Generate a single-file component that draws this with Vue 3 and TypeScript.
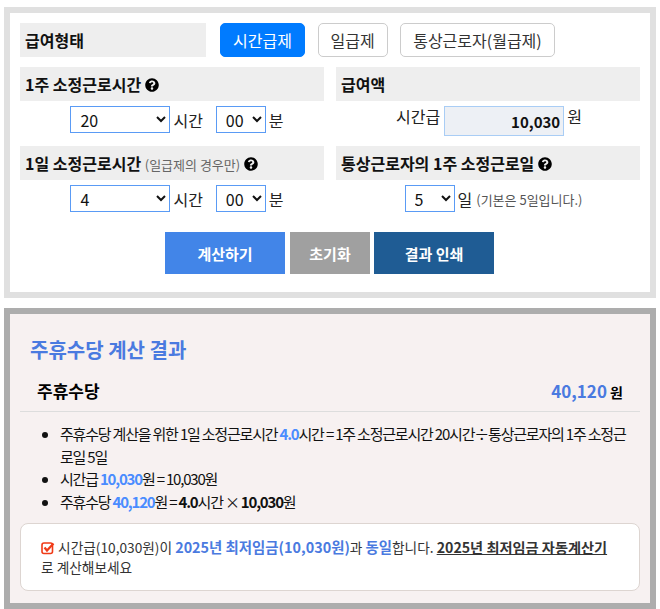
<script setup lang="ts">
const payTypes: string[] = ['시간급제', '일급제', '통상근로자(월급제)']
</script>

<template>
  <div class="page">
    <section class="form-panel">
      <div class="type-row">
        <div class="type-label">급여형태</div>
        <div class="type-buttons">
          <button v-for="(t, i) in payTypes" :key="t" class="type-btn" :class="{ active: i === 0 }">{{ t }}</button>
        </div>
      </div>
      <div class="grid">
        <div class="cell">
          <div class="head">1주 소정근로시간 <svg class="help" viewBox="0 0 512 512"><path d="M504 256c0 137-111 248-248 248S8 393 8 256 119 8 256 8s248 111 248 248zM262.700 90c-54.500 0-89.300 23-116.500 63.800-3.500 5.300-2.400 12.400 2.700 16.300l34.700 26.300c5.200 3.900 12.600 3 16.700-2.100 17.900-22.700 30.100-35.800 57.300-35.800 20.400 0 45.700 13.100 45.700 32.900 0 15-12.400 22.700-32.500 34-23.500 13.200-54.600 29.600-54.600 70.700V302c0 6.600 5.400 12 12 12h56c6.600 0 12-5.400 12-12v-1.300c0-28.500 83.200-29.700 83.200-106.700 0-58-60.200-102-116.700-102zM256 338c-25.400 0-46 20.600-46 46s20.600 46 46 46 46-20.600 46-46-20.600-46-46-46z"/></svg></div>
          <div class="controls shifted">
            <select class="sel wide"><option>20</option></select><span class="unit">시간</span>
            <select class="sel narrow gap"><option>00</option></select><span class="unit">분</span>
          </div>
        </div>
        <div class="cell">
          <div class="head">급여액</div>
          <div class="controls wage">
            <span class="unit wage-label">시간급</span>
            <input class="wage-input" value="10,030" readonly />
            <span class="unit">원</span>
          </div>
        </div>
        <div class="cell">
          <div class="head">1일 소정근로시간 <small>(일급제의 경우만)</small> <svg class="help" viewBox="0 0 512 512"><path d="M504 256c0 137-111 248-248 248S8 393 8 256 119 8 256 8s248 111 248 248zM262.700 90c-54.500 0-89.300 23-116.500 63.800-3.500 5.300-2.400 12.400 2.700 16.300l34.700 26.300c5.200 3.900 12.600 3 16.700-2.100 17.900-22.700 30.100-35.800 57.300-35.800 20.400 0 45.700 13.100 45.700 32.900 0 15-12.400 22.700-32.500 34-23.500 13.200-54.600 29.600-54.600 70.700V302c0 6.600 5.400 12 12 12h56c6.600 0 12-5.400 12-12v-1.300c0-28.500 83.200-29.700 83.200-106.700 0-58-60.200-102-116.700-102zM256 338c-25.400 0-46 20.600-46 46s20.600 46 46 46 46-20.600 46-46-20.600-46-46-46z"/></svg></div>
          <div class="controls shifted">
            <select class="sel wide"><option>4</option></select><span class="unit">시간</span>
            <select class="sel narrow gap"><option>00</option></select><span class="unit">분</span>
          </div>
        </div>
        <div class="cell">
          <div class="head">통상근로자의 1주 소정근로일 <svg class="help" viewBox="0 0 512 512"><path d="M504 256c0 137-111 248-248 248S8 393 8 256 119 8 256 8s248 111 248 248zM262.700 90c-54.500 0-89.300 23-116.500 63.800-3.500 5.300-2.400 12.400 2.700 16.300l34.700 26.300c5.200 3.900 12.600 3 16.700-2.100 17.900-22.700 30.100-35.800 57.300-35.800 20.400 0 45.700 13.100 45.700 32.900 0 15-12.400 22.700-32.500 34-23.500 13.200-54.600 29.600-54.600 70.700V302c0 6.600 5.400 12 12 12h56c6.600 0 12-5.400 12-12v-1.300c0-28.500 83.200-29.700 83.200-106.700 0-58-60.200-102-116.700-102zM256 338c-25.400 0-46 20.600-46 46s20.600 46 46 46 46-20.600 46-46-20.600-46-46-46z"/></svg></div>
          <div class="controls shifted-more">
            <select class="sel narrow"><option>5</option></select><span class="unit">일</span>
            <small class="hint">(기본은 5일입니다.)</small>
          </div>
        </div>
      </div>
      <div class="actions">
        <button class="act calc">계산하기</button>
        <button class="act reset">초기화</button>
        <button class="act print">결과 인쇄</button>
      </div>
    </section>

    <section class="result-panel">
      <h2 class="title">주휴수당 계산 결과</h2>
      <div class="sum-row">
        <span class="sum-label">주휴수당</span>
        <span class="sum-value"><em>40,120</em> 원</span>
      </div>
      <ul class="list">
        <li>주휴수당 계산을 위한 1일 소정근로시간 <b class="blue">4.0</b>시간 = 1주 소정근로시간 20시간÷통상근로자의 1주 소정근로일 5일</li>
        <li>시간급 <b class="blue">10,030</b>원 = 10,030원</li>
        <li>주휴수당 <b class="blue">40,120</b>원 = <b>4.0</b>시간 × <b>10,030</b>원</li>
      </ul>
      <div class="notice">
        <svg class="check" viewBox="0 0 14 14">
          <rect x="1" y="2" width="10.500" height="10.500" rx="2" fill="none" stroke="#f03a17" stroke-width="1.600"/>
          <path d="M3.500 6.500 6 9.500 12.500 2.500" fill="none" stroke="#f03a17" stroke-width="2.200"/>
        </svg>
        시간급(10,030원)이 <b class="nblue">2025년 최저임금(10,030원)</b>과 <b class="nblue">동일</b>합니다. <a class="link">2025년 최저임금 자동계산기</a>로 계산해보세요
      </div>
    </section>
  </div>
</template>

<style>
html, body { margin: 0; background: #fff; }
</style>

<style scoped>
.page {
  width: 660px;
  height: 609px;
  overflow: hidden;
  box-sizing: border-box;
  padding: 7px 4px 0;
  font-family: "Noto Sans CJK KR", "Noto Sans", sans-serif;
  color: #222;
}
.form-panel {
  box-sizing: border-box;
  height: 291px;
  border: 6px solid #e0e0e0;
  padding: 10px;
  background: #fff;
}
.type-row {
  display: flex;
  height: 34px;
}
.type-label {
  width: 186px;
  box-sizing: border-box;
  padding-left: 5px;
  background: #eee;
  font-size: 16px;
  font-weight: 700;
  line-height: 34px;
  color: #111;
}
.type-buttons {
  display: flex;
  gap: 12.500px;
  margin-left: 14px;
}
.type-btn {
  height: 34px;
  box-sizing: border-box;
  padding: 0 12px;
  border: 1px solid #ccc;
  border-radius: 5px;
  background: #fff;
  color: #333;
  font: 400 16px/1 "Noto Sans CJK KR", sans-serif;
}
.type-btn.active {
  width: 85px;
  border-color: #007bff;
  background: #007bff;
  color: #fff;
}
.grid {
  display: grid;
  grid-template-columns: 304px 304px;
  column-gap: 12px;
  row-gap: 10px;
  margin-top: 10px;
}
.head {
  height: 34px;
  box-sizing: border-box;
  padding-left: 5px;
  background: #eee;
  font-size: 16px;
  line-height: 34px;
  font-weight: 700;
  color: #111;
  white-space: nowrap;
}
.head small {
  font-size: 13px;
  font-weight: 400;
  color: #666;
}
.help {
  width: 14px;
  height: 14px;
  fill: #000;
  vertical-align: -1px;
}
.controls {
  display: flex;
  justify-content: center;
  align-items: flex-start;
  margin-top: 5px;
  font-size: 16px;
  line-height: 29px;
  color: #222;
}
.shifted { padding-left: 10px; }
.shifted-more { padding-left: 11px; }
.sel {
  height: 27px;
  box-sizing: border-box;
  border: 1px solid #5a9bf5;
  border-radius: 0;
  background: #fff;
  color: #111;
  padding: 0 0 0 5px;
  font: 400 16px "Noto Sans CJK KR", sans-serif;
}
.sel.wide { width: 100px; }
.sel.narrow { width: 50px; }
.sel.gap { margin-left: 13px; }
.unit { margin-left: 3px; }
.hint {
  margin-left: 4px;
  font-size: 13px;
  color: #555;
}
.wage { line-height: 21px; padding-left: 2px; }
.wage-label { margin-left: 0; margin-right: 4px; }
.wage-input {
  width: 120px;
  height: 30px;
  box-sizing: border-box;
  border: 1px solid #a9cdf5;
  background: #edf0f5;
  padding: 0 3px 0 0;
  text-align: right;
  font: 700 15px "Noto Sans CJK KR", sans-serif;
  color: #111;
  outline: none;
}
.actions {
  display: flex;
  justify-content: center;
  margin-top: 18px;
  padding-right: 1px;
}
.act {
  height: 42px;
  border: 0;
  color: #fff;
  font: 700 15px "Noto Sans CJK KR", sans-serif;
  padding: 0;
}
.calc { width: 120px; background: #4285e8; }
.reset { width: 80px; background: #a0a0a0; margin-left: 5px; }
.print { width: 120px; background: #1f5c94; margin-left: 4px; }
.result-panel {
  box-sizing: border-box;
  height: 301px;
  margin-top: 10px;
  border: 6px solid #adadad;
  background: #f7f1f1;
  padding: 0 10px;
}
.title {
  margin: 0;
  padding: 22px 0 0 10px;
  height: 28px;
  font-size: 20px;
  line-height: 28px;
  font-weight: 700;
  color: #4a7ae0;
}
.sum-row {
  display: flex;
  justify-content: space-between;
  align-items: center;
  height: 37px;
  margin-top: 10px;
  padding: 0 17px;
  border-bottom: 1px solid #ddd;
  font-size: 17px;
  font-weight: 700;
  color: #000;
}
.sum-label { padding-bottom: 4px; }
.sum-value {
  padding-bottom: 4px;
  font-size: 14px;
}
.sum-value em {
  font-style: normal;
  font-size: 17px;
  color: #4a7ae0;
}
.list {
  margin: 11px 0 0;
  padding: 0 10px 0 40px;
  font-size: 15px;
  line-height: 22.500px;
  letter-spacing: -1.200px;
  color: #111;
}
.blue { color: #4a8cff; }
.list b { font-weight: 700; }
.notice {
  box-sizing: border-box;
  height: 68px;
  margin-top: 10px;
  padding: 13px 20px;
  background: #fff;
  border: 1px solid #ddd5d1;
  border-radius: 8px;
  font-size: 13.700px;
  line-height: 20px;
  color: #333;
}
.check {
  width: 14px;
  height: 14px;
  vertical-align: -2px;
}
.nblue { color: #4a7ae0; font-weight: 700; font-size: 14.400px; }
.link {
  font-size: 14.200px;
  font-weight: 700;
  color: #333;
  text-decoration: underline;
}
</style>
